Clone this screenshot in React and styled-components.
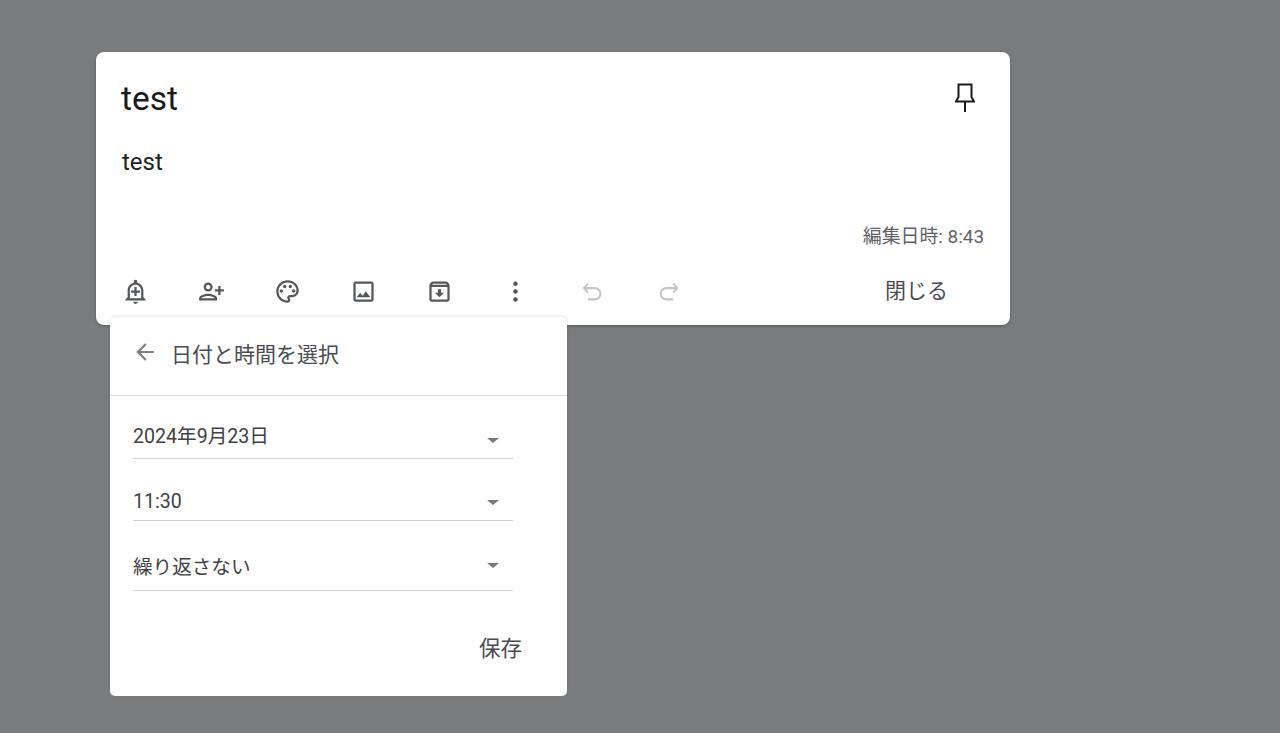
import React from 'react';
import styled, { createGlobalStyle } from 'styled-components';

const GlobalStyle = createGlobalStyle`
    html, body {
        margin: 0;
        padding: 0;
        height: 100%;
        background: #7a7b7d;
        font-family: Roboto, "Noto Sans CJK JP", sans-serif;
    }
`;

const Page = styled.div`
    height: 733px;
    box-sizing: border-box;
    padding: 52px 0 0 96px;
    overflow: hidden;
`;

const Note = styled.div`
    position: relative;
    width: 914px;
    height: 273px;
    box-sizing: border-box;
    background: #fff;
    border-radius: 8px;
    box-shadow: 0 1px 3px rgba(0, 0, 0, 0.25);
    display: flex;
    flex-direction: column;
`;

const TitleRow = styled.div`
    display: flex;
    align-items: flex-start;
    justify-content: space-between;
    padding: 28px 35px 0 25px;
    height: 95px;
    box-sizing: border-box;
`;

const Title = styled.div`
    font-size: 33.5px;
    line-height: 38px;
    color: #1a1a1b;
`;

const PinButton = styled.div`
    width: 20px;
    height: 30px;
    margin-top: 3px;
    color: #1a1a1b;
`;

const Body = styled.div`
    padding: 0 0 0 26px;
    font-size: 24px;
    line-height: 30px;
    color: #202124;
    flex: 1;
`;

const Edited = styled.div`
    padding: 0 26px 12px 0;
    text-align: right;
    font-size: 18.9px;
    line-height: 24px;
    color: #5f6368;
`;

const Toolbar = styled.div`
    display: flex;
    align-items: center;
    height: 64px;
    box-sizing: border-box;
    padding: 0 62px 4px 26px;
`;

const ToolIcon = styled.div`
    width: 27px;
    height: 27px;
    margin-right: ${p => p.$gap}px;
    color: ${p => (p.$disabled ? '#c2c4c6' : '#55575a')};
`;

const CloseButton = styled.div`
    margin-left: auto;
    font-size: 21px;
    line-height: 28px;
    color: #4a4c4f;
`;

const Popup = styled.div`
    position: absolute;
    left: 14px;
    top: 265px;
    width: 457px;
    height: 379px;
    background: #fff;
    border-radius: 5px;
    box-shadow: 0 -1px 3px rgba(0, 0, 0, 0.1);
    display: flex;
    flex-direction: column;
`;

const PopupHeader = styled.div`
    display: flex;
    align-items: center;
    height: 79px;
    box-sizing: border-box;
    padding: 0 0 2px 22px;
    border-bottom: 1px solid #dadce0;
`;

const BackIcon = styled.div`
    width: 26px;
    height: 26px;
    margin-right: 13px;
    margin-top: -6px;
    color: #7d7f82;
`;

const PopupTitle = styled.div`
    font-size: 21px;
    line-height: 28px;
    color: #4a4c4f;
`;

const FieldRow = styled.div`
    display: flex;
    align-items: center;
    justify-content: space-between;
    width: 380px;
    height: ${p => p.$height}px;
    margin-left: 23px;
    box-sizing: border-box;
    padding: ${p => p.$top}px 14px 0 0;
    border-bottom: 1.5px solid #cfd1d3;
    font-size: 19.6px;
    line-height: 24px;
    color: #3f4144;
`;

const Caret = styled.div`
    width: 0;
    height: 0;
    margin-top: ${p => p.$shift}px;
    border-left: 6px solid transparent;
    border-right: 6px solid transparent;
    border-top: 5px solid #76787b;
`;

const SaveRow = styled.div`
    display: flex;
    justify-content: flex-end;
    padding: 44px 45px 0 0;
    font-size: 21.5px;
    line-height: 28px;
    color: #4a4c4f;
`;

const Svg = ({ children, mirror }) => (
    <svg
        width="100%"
        height="100%"
        viewBox="0 0 24 24"
        fill="currentColor"
        style={mirror ? { transform: 'scaleX(-1)' } : undefined}
    >
        {children}
    </svg>
);

const tools = [
    {
        gap: 49,
        icon: <Svg><path d="M10.01 21.01c0 1.1.89 1.99 1.99 1.99s1.99-.89 1.99-1.99h-3.98zM12 6c2.76 0 5 2.24 5 5v7H7v-7c0-2.76 2.24-5 5-5zm0-4.5c-.83 0-1.5.67-1.5 1.5v1.17C7.36 4.85 5 7.65 5 11v6l-2 2v1h18v-1l-2-2v-6c0-3.35-2.36-6.15-5.5-6.83V3c0-.83-.67-1.5-1.5-1.5zM13 8h-2v3H8v2h3v3h2v-3h3v-2h-3z" /></Svg>
    },
    {
        gap: 49,
        icon: <Svg mirror><path d="M15 12c2.21 0 4-1.79 4-4s-1.79-4-4-4-4 1.79-4 4 1.79 4 4 4zm0-6c1.1 0 2 .9 2 2s-.9 2-2 2-2-.9-2-2 .9-2 2-2zm0 8c-2.67 0-8 1.34-8 4v2h16v-2c0-2.66-5.33-4-8-4zm-6 4c.22-.72 3.31-2 6-2 2.7 0 5.8 1.29 6 2H9zm-3-3v-3h3v-2H6V7H4v3H1v2h3v3h2z" /></Svg>
    },
    {
        gap: 49,
        icon: (
            <Svg>
                <path d="M12 22C6.49 22 2 17.51 2 12S6.49 2 12 2s10 4.04 10 9c0 3.31-2.69 6-6 6h-1.77c-.28 0-.5.22-.5.5 0 .12.05.23.13.33.41.47.64 1.06.64 1.67 0 1.38-1.12 2.5-2.5 2.5zm0-18c-4.41 0-8 3.59-8 8s3.59 8 8 8c.28 0 .5-.22.5-.5 0-.16-.08-.28-.14-.35-.41-.46-.63-1.05-.63-1.65 0-1.38 1.12-2.5 2.5-2.5H16c2.21 0 4-1.79 4-4 0-3.86-3.59-7-8-7z" />
                <circle cx="6.5" cy="11.5" r="1.5" />
                <circle cx="9.5" cy="7.5" r="1.5" />
                <circle cx="14.5" cy="7.5" r="1.5" />
                <circle cx="17.5" cy="11.5" r="1.5" />
            </Svg>
        )
    },
    {
        gap: 49,
        icon: <Svg><path d="M19 5v14H5V5h14m0-2H5c-1.1 0-2 .9-2 2v14c0 1.1.9 2 2 2h14c1.1 0 2-.9 2-2V5c0-1.1-.9-2-2-2zm-4.86 8.86l-3 3.87L9 13.14 6 17h12l-3.86-5.14z" /></Svg>
    },
    {
        gap: 49,
        icon: <Svg><path d="M20.54 5.23l-1.39-1.68C18.88 3.21 18.47 3 18 3H6c-.47 0-.88.21-1.16.55L3.46 5.23C3.17 5.57 3 6.02 3 6.5V19c0 1.1.9 2 2 2h14c1.1 0 2-.9 2-2V6.5c0-.48-.17-.93-.46-1.27zM6.24 5h11.52l.81.97H5.44l.8-.97zM5 19V8h14v11H5zm8.45-9h-2.9v3H8l4 4 4-4h-2.55z" /></Svg>
    },
    {
        gap: 50,
        icon: (
            <Svg>
                <circle cx="12" cy="5" r="2" />
                <circle cx="12" cy="12" r="2" />
                <circle cx="12" cy="19" r="2" />
            </Svg>
        )
    },
    {
        gap: 49,
        disabled: true,
        icon: <Svg><path d="M4 9l4-4M4 9l4 4M4 9h10a5 5 0 0 1 0 10H8" fill="none" stroke="currentColor" strokeWidth="1.8" /></Svg>
    },
    {
        gap: 0,
        disabled: true,
        icon: <Svg mirror><path d="M4 9l4-4M4 9l4 4M4 9h10a5 5 0 0 1 0 10H8" fill="none" stroke="currentColor" strokeWidth="1.8" /></Svg>
    }
];

const fields = [
    { label: '2024年9月23日', height: 63, top: 20, shift: 6 },
    { label: '11:30', height: 62, top: 25, shift: 0 },
    { label: '繰り返さない', height: 70, top: 24, shift: -5 }
];

const App = () => (
    <Page>
        <GlobalStyle />
        <Note>
            <TitleRow>
                <Title>test</Title>
                <PinButton>
                    <svg width="100%" height="100%" viewBox="0 0 20 30" fill="none" stroke="currentColor" strokeWidth="2">
                        <path d="M3.5 1.5h13v12.5l2.5 4.5H1l2.5-4.5zM10 18.5V29" />
                    </svg>
                </PinButton>
            </TitleRow>
            <Body>test</Body>
            <Edited>編集日時: 8:43</Edited>
            <Toolbar>
                {tools.map((tool, idx) => (
                    <ToolIcon key={idx} $gap={tool.gap} $disabled={tool.disabled}>{tool.icon}</ToolIcon>
                ))}
                <CloseButton>閉じる</CloseButton>
            </Toolbar>
            <Popup>
                <PopupHeader>
                    <BackIcon>
                        <Svg><path d="M20 11H7.83l5.59-5.59L12 4l-8 8 8 8 1.41-1.41L7.83 13H20v-2z" /></Svg>
                    </BackIcon>
                    <PopupTitle>日付と時間を選択</PopupTitle>
                </PopupHeader>
                {fields.map(field => (
                    <FieldRow key={field.label} $height={field.height} $top={field.top}>
                        {field.label}
                        <Caret $shift={field.shift} />
                    </FieldRow>
                ))}
                <SaveRow>保存</SaveRow>
            </Popup>
        </Note>
    </Page>
);

export default App;
